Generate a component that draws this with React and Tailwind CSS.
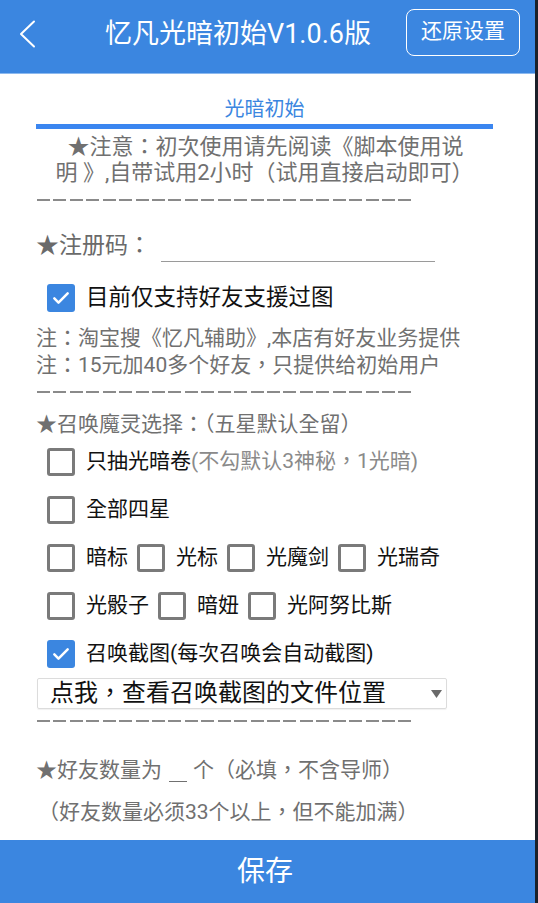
const font = "font-['Roboto','Noto_Sans_CJK_TC',sans-serif]";

function Box({ checked }) {
  if (checked) {
    return (
      <span className="w-[28px] h-[28px] rounded-[3px] bg-[#3b86e0] flex items-center justify-center shrink-0">
        <svg width="20" height="20" viewBox="0 0 24 24" fill="none" stroke="white" strokeWidth="3" strokeLinecap="round" strokeLinejoin="round">
          <path d="M4 12.5l5 5L20 6.5" />
        </svg>
      </span>
    );
  }
  return <span className="w-[28px] h-[28px] rounded-[3px] border-[3px] border-[#7a7a7a] shrink-0" />;
}

// row of separate dashes, drawn as a striped line
function Dashes() {
  return (
    <div className="h-[20px] flex items-center">
      <div className="ml-[1px] w-[378px] h-[1.5px] bg-[repeating-linear-gradient(90deg,#8a8a8a_0_13px,transparent_13px_16.43px)]" />
    </div>
  );
}

function Opt({ label }) {
  return (
    <span className="flex items-center mr-[9px]">
      <Box />
      <span className="ml-[11px] text-[21px] text-[#111]">{label}</span>
    </span>
  );
}

export default function App() {
  return (
    <div className={`w-[538px] h-[903px] flex bg-white ${font}`}>
      <div className="w-[535px] flex flex-col">
        <header className="h-[74px] bg-[#3b86e0] border-b border-[#8cb9ef] flex items-center">
          <svg className="ml-[19px] mb-[5px]" width="18" height="28" viewBox="0 0 18 28" fill="none" stroke="white" strokeWidth="2" strokeLinecap="round" strokeLinejoin="round">
            <path d="M15 1.5L2 14l13 12.5" />
          </svg>
          <h1 className="ml-[68px] mb-[4px] text-white text-[27px]">忆凡光暗初始V1.0.6版</h1>
          <button className="ml-auto mr-[15px] mb-[9px] w-[114px] h-[47px] rounded-[8px] border-[1.5px] border-white text-white text-[21px]">
            还原设置
          </button>
        </header>

        <div className="pl-[36px] flex flex-col">
          <div className="w-[457px] pt-[23px] text-center text-[20px] leading-[24px] text-[#3b86e0]">光暗初始</div>
          <div className="w-[457px] h-[5px] mt-[3px] bg-[#3b86f0]" />
          <div className="w-[457px] mt-[5px] text-center text-[22px] leading-[26px] text-[#707070]">
            <div className="pl-[2px]">★注意：初次使用请先阅读《脚本使用说</div>
            <div>明 》,自带试用2小时（试用直接启动即可）</div>
          </div>
          <div className="mt-[4px]">
            <Dashes />
          </div>

          <div className="mt-[21px] flex items-end h-[30px]">
            <span className="text-[23px] leading-[30px] text-[#6a6a6a]">★注册码：</span>
            <span className="ml-[10px] mb-[-1px] w-[274px] border-b-[1.5px] border-[#9a9a9a]" />
          </div>

          <div className="mt-[13px] h-[48px] flex items-center pl-[11px]">
            <Box checked />
            <span className="ml-[11px] text-[22.5px] text-[#111]">目前仅支持好友支援过图</span>
          </div>

          <div className="mt-[3px] text-[21px] leading-[27px] text-[#707070]">
            <div>注：淘宝搜《忆凡辅助》,本店有好友业务提供</div>
            <div>注：15元加40多个好友，只提供给初始用户</div>
          </div>
          <div className="mt-[3px]">
            <Dashes />
          </div>

          <div className="mt-[9px] text-[21px] leading-[27px] text-[#707070]">★召唤魔灵选择：（五星默认全留）</div>

          <div className="pl-[11px]">
            <div className="h-[48px] flex items-center">
              <Box />
              <span className="ml-[11px] text-[21px] text-[#111]">只抽光暗卷</span>
              <span className="text-[21px] text-[#8a8a8a]">(不勾默认3神秘，1光暗)</span>
            </div>
            <div className="h-[48px] flex items-center">
              <Opt label="全部四星" />
            </div>
            <div className="h-[48px] flex items-center">
              <Opt label="暗标" />
              <Opt label="光标" />
              <Opt label="光魔剑" />
              <Opt label="光瑞奇" />
            </div>
            <div className="h-[48px] flex items-center">
              <Opt label="光骰子" />
              <Opt label="暗妞" />
              <Opt label="光阿努比斯" />
            </div>
            <div className="h-[48px] flex items-center">
              <Box checked />
              <span className="ml-[11px] text-[21px] text-[#111]">召唤截图(每次召唤会自动截图)</span>
            </div>
          </div>

          <div className="ml-[1px] w-[410px] h-[31px] border border-[#dcdcdc] rounded-[2px] flex items-center pl-[12px] pr-[3px] shadow-[0_1px_1px_rgba(0,0,0,0.06)]">
            <span className="text-[24px] leading-[31px] text-[#111]">点我，查看召唤截图的文件位置</span>
            <svg className="ml-auto mr-[1px]" width="11" height="8" viewBox="0 0 11 8">
              <path d="M0 0h11L5.5 8z" fill="#6a6a6a" />
            </svg>
          </div>
          <div className="mt-[2px]">
            <Dashes />
          </div>

          <div className="mt-[26px] flex items-end text-[21px] leading-[27px] text-[#707070]">
            <span>★好友数量为</span>
            <span className="ml-[7px] mr-[6px] mb-[2px] w-[18px] border-b-[1.5px] border-[#707070]" />
            <span>个（必填，不含导师）</span>
          </div>
          <div className="mt-[15px] pl-[2px] text-[21px] leading-[27px] text-[#707070]">（好友数量必须33个以上，但不能加满）</div>
        </div>

        <button className="mt-auto h-[63px] w-full bg-[#3b86e0] text-white text-[28px] pr-[5px]">保存</button>
      </div>
      <div className="w-[3px] bg-[#1b2029]" />
    </div>
  );
}
